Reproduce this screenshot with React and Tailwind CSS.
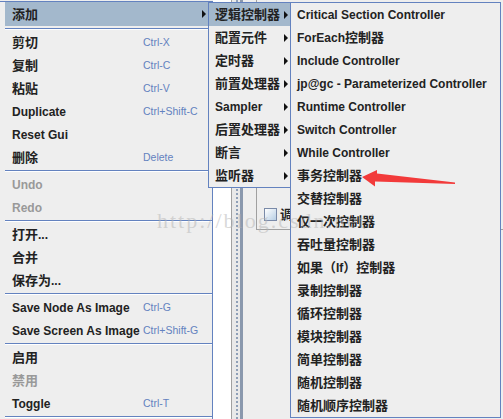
import React from "react";

const CJK = /([\u2E80-\u9FFF\uFF00-\uFFEF]+)/;
const isCJK = (s) => /[\u2E80-\u9FFF\uFF00-\uFFEF]/.test(s);

function T({ s }) {
  return (
    <>
      {s
        .split(CJK)
        .filter(Boolean)
        .map((p, i) =>
          isCJK(p) ? (
            <span key={i} className="text-[13px]">
              {p}
            </span>
          ) : (
            <span key={i}>{p}</span>
          )
        )}
    </>
  );
}

function Arrow() {
  return (
    <svg width="4" height="8" viewBox="0 0 4 8" className="shrink-0">
      <path d="M0 0 L4 4 L0 8 Z" fill="#111" />
    </svg>
  );
}

function Sep({ first }) {
  return (
    <div className={first ? "h-[5px] pt-[2px]" : "h-[4px] pt-[1px]"}>
      <div className="h-px bg-[#6382bf]" />
      <div className="h-px bg-white" />
    </div>
  );
}

const mainItems = [
  { t: "添加", sub: true, hl: true },
  "sep1",
  { t: "剪切", k: "Ctrl-X" },
  { t: "复制", k: "Ctrl-C" },
  { t: "粘贴", k: "Ctrl-V" },
  { t: "Duplicate", k: "Ctrl+Shift-C" },
  { t: "Reset Gui" },
  { t: "删除", k: "Delete" },
  "sep",
  { t: "Undo", dis: true },
  { t: "Redo", dis: true },
  "sep",
  { t: "打开..." },
  { t: "合并" },
  { t: "保存为..." },
  "sep",
  { t: "Save Node As Image", k: "Ctrl-G" },
  { t: "Save Screen As Image", k: "Ctrl+Shift-G" },
  "sep",
  { t: "启用" },
  { t: "禁用", dis: true },
  { t: "Toggle", k: "Ctrl-T" },
  "sep",
];

const sub2 = ["逻辑控制器", "配置元件", "定时器", "前置处理器", "Sampler", "后置处理器", "断言", "监听器"];

const sub3 = [
  "Critical Section Controller",
  "ForEach控制器",
  "Include Controller",
  "jp@gc - Parameterized Controller",
  "Runtime Controller",
  "Switch Controller",
  "While Controller",
  "事务控制器",
  "交替控制器",
  "仅一次控制器",
  "吞吐量控制器",
  "如果（If）控制器",
  "录制控制器",
  "循环控制器",
  "模块控制器",
  "简单控制器",
  "随机控制器",
  "随机顺序控制器",
];

export default function App() {
  return (
    <div
      className="relative w-[503px] h-[419px] overflow-hidden bg-[#eeeeee] flex text-[12px] font-bold text-[#222] leading-none"
      style={{ fontFamily: '"Liberation Sans", "Noto Sans CJK SC", sans-serif' }}
    >
      {/* main popup menu */}
      <div className="w-[213px] h-full pt-[1px] shrink-0">
        <div className="h-full border-t border-r border-[#6382bf] pl-[5px] bg-[#eeeeee] flex flex-col">
          {mainItems.map((it, i) => {
            if (it === "sep1") return <Sep key={i} first />;
            if (it === "sep") return <Sep key={i} />;
            return (
              <div
                key={i}
                className={
                  (it.hl ? "h-[24px] bg-[#a3b8cc] " : "h-[23px] ") +
                  "flex items-center pl-[7px] pr-[6px] shrink-0 " +
                  (it.dis ? "text-[#999999]" : "")
                }
              >
                <div className="w-[131px] shrink-0 whitespace-nowrap">
                  <T s={it.t} />
                </div>
                {it.k && (
                  <div className="text-[10.5px] font-normal text-[#6382bf] whitespace-nowrap">{it.k}</div>
                )}
                {it.sub && (
                  <div className="flex-1 flex justify-end">
                    <Arrow />
                  </div>
                )}
              </div>
            );
          })}
        </div>
      </div>

      {/* background application behind menus */}
      <div className="w-[19px] h-full bg-white border-r border-[#a0a0a0] shrink-0" />
      <div className="w-[8px] h-full bg-[#e9e9e9] shrink-0 pl-[4px]">
        <div className="h-full border-l-2 border-dotted border-[#8fa0b8]" />
      </div>
      <div className="w-[3px] h-full bg-[#8a98ad] shrink-0" />
      <div className="flex-1 h-full bg-[#eeeeee] pl-[13px]">
        <div className="h-[230px] border-l border-b border-[#a0a0a0] pt-[208px] pl-[7px] flex items-start gap-[3px]">
          <div className="w-[13px] h-[13px] border border-[#7a8aa8] bg-gradient-to-br from-white to-[#b8cfe5] shrink-0" />
          <div className="text-[13px] leading-[13px]">调试</div>
        </div>
      </div>

      {/* submenu level 2 */}
      <div className="absolute left-[208px] top-[2px] w-[83px] border border-[#6382bf] bg-[#eeeeee] flex flex-col">
        {sub2.map((t, i) => (
          <div
            key={i}
            className={
              "h-[23px] flex items-center pl-[6px] pr-[2px] justify-between " + (i === 0 ? "bg-[#a3b8cc]" : "")
            }
          >
            <div className="whitespace-nowrap">
              <T s={t} />
            </div>
            <Arrow />
          </div>
        ))}
      </div>

      {/* submenu level 3 */}
      <div className="absolute left-[290px] top-[2px] w-[211px] border border-[#6382bf] bg-[#eeeeee] flex flex-col">
        {sub3.map((t, i) => (
          <div key={i} className="h-[23px] flex items-center pl-[6px] whitespace-nowrap">
            <T s={t} />
          </div>
        ))}
      </div>

      {/* watermark */}
      <div
        className="absolute left-[157px] top-[210px] text-[22px] font-normal tracking-[2px] text-[#b4b4b4]/50 pointer-events-none whitespace-nowrap"
        style={{ fontFamily: '"Liberation Serif", serif' }}
      >
        http://blog.csdn.net/
      </div>

      {/* red annotation arrow */}
      <svg className="absolute left-[350px] top-[160px] pointer-events-none" width="110" height="32" viewBox="0 0 110 32">
        <polygon points="12,17 27,10 27,13.5 105,22.5 105,24 25,21.5 25,26.5" fill="#f23a3a" />
      </svg>
    </div>
  );
}
